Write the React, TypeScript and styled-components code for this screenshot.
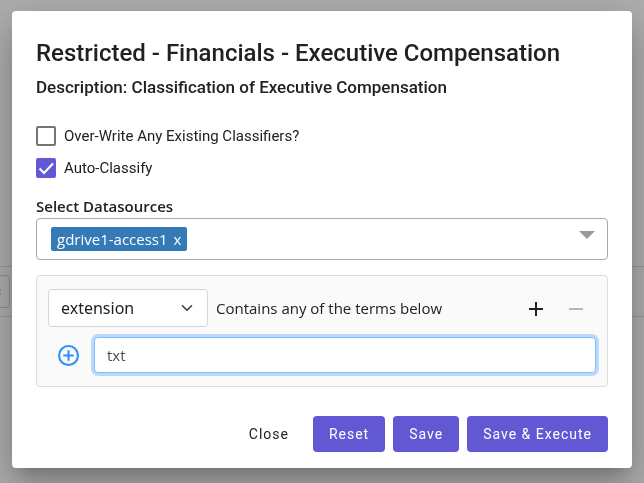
import React, { useState } from "react";
import styled, { createGlobalStyle } from "styled-components";

const GlobalStyle = createGlobalStyle`
  *, *::before, *::after { box-sizing: border-box; }
  body { margin: 0; background: #fff; color: #212121; font-family: Roboto, sans-serif; font-size: 15px; }
  button, input, select { font: inherit; color: inherit; margin: 0; }
`;

const Page = styled.div`
  min-height: 100vh;
  padding-top: 266px;
`;

const PageRow = styled.div`
  display: flex;
  align-items: center;
  height: 51px;
  border: solid #dee2e6;
  border-width: 1px 0;
`;

const PageTag = styled.span`
  width: 10px;
  height: 33px;
  border: 1px solid #ced4da;
  border-left: 0;
  border-radius: 0 4px 4px 0;
  color: #17a2b8;
  line-height: 31px;
  direction: rtl;
  padding-right: 8px;
`;

const Backdrop = styled.div`
  position: fixed;
  inset: 0;
  display: flex;
  align-items: flex-start;
  justify-content: center;
  padding: 11px 12px 15px;
  background: rgba(0, 0, 0, 0.32);
`;

const Dialog = styled.div`
  width: 100%;
  padding: 24px 24px 16px;
  border-radius: 4px;
  background: #fff;
  box-shadow: 0 11px 15px -7px rgba(0, 0, 0, 0.2), 0 24px 38px 3px rgba(0, 0, 0, 0.14),
    0 9px 46px 8px rgba(0, 0, 0, 0.12);
`;

const Title = styled.h1`
  margin: 0;
  font-size: 24px;
  font-weight: 500;
  line-height: 36px;
`;

const Subtitle = styled.h2`
  margin: 4px 0 0;
  font-size: 17px;
  font-weight: 500;
  line-height: 24px;
`;

const Options = styled.div`
  display: grid;
  gap: 12px;
  margin: 27px 0 16px;
`;

const Option = styled.label`
  display: flex;
  align-items: center;
  gap: 8px;
  line-height: 20px;
`;

const TickBox = styled.span`
  display: grid;
  width: 20px;
  height: 20px;
  & > * { grid-area: 1 / 1; }
  svg { pointer-events: none; }
`;

const Tick = styled.input`
  appearance: none;
  width: 20px;
  height: 20px;
  border: 2px solid #757575;
  border-radius: 2px;
  &:checked { background: #6258d3; border-color: #6258d3; }
`;

const FieldLabel = styled.div`
  font-family: "Open Sans", sans-serif;
  font-size: 15px;
  font-weight: 600;
  line-height: 24px;
`;

const SourceBox = styled.div`
  display: flex;
  align-items: center;
  justify-content: space-between;
  min-height: 42px;
  padding: 0 11px 0 14px;
  border: 1px solid #a8a8a8;
  border-radius: 4px;
`;

const Chip = styled.span`
  display: flex;
  align-items: center;
  gap: 6px;
  height: 24px;
  padding: 0 6px;
  border-radius: 2px;
  background: #337ab7;
  color: #fff;
  font-family: "Open Sans", sans-serif;
  font-size: 15px;
`;

const BareButton = styled.button`
  display: flex;
  padding: 0;
  border: 0;
  background: none;
`;

const OpenButton = styled(BareButton)`
  padding: 0 1px 8px;
`;

const Rule = styled.section`
  display: grid;
  gap: 10px;
  margin-top: 15px;
  padding: 13px 11px;
  border: 1px solid #dcdcdc;
  border-radius: 4px;
  background: #fafafa;
  font-family: "Open Sans", sans-serif;
`;

const RuleHead = styled.div`
  display: flex;
  align-items: center;
`;

const SelectWrap = styled.span`
  display: grid;
  align-items: center;
  width: 160px;
  margin-right: 8px;
  & > * { grid-area: 1 / 1; }
  svg { justify-self: end; margin-right: 15px; pointer-events: none; }
`;

const Select = styled.select`
  appearance: none;
  width: 100%;
  height: 38px;
  padding: 0 32px 0 12px;
  border: 1px solid #ced4da;
  border-radius: 4px;
  background: #fff;
  font-family: "Noto Sans", sans-serif;
  font-size: 16px;
`;

const RuleText = styled.span`
  flex: 1;
`;

const IconButton = styled(BareButton)`
  justify-content: center;
  align-items: center;
  width: 40px;
  height: 38px;
  &:disabled { color: #b8b8b8; }
`;

const TermRow = styled.div`
  display: flex;
  align-items: center;
`;

const AddTerm = styled(IconButton)`
  height: 36px;
  margin-right: 6px;
  color: #2e90fa;
`;

const TermInput = styled.input`
  flex: 1;
  min-width: 0;
  height: 36px;
  padding: 0 12px;
  border: 1px solid #80bdff;
  border-radius: 4px;
  outline: 0;
  background: #fff;
  box-shadow: 0 0 0 3px rgba(0, 123, 255, 0.25);
  color: #495057;
`;

const Actions = styled.footer`
  display: flex;
  justify-content: flex-end;
  gap: 8px;
  margin-top: 29px;
`;

const Action = styled.button<{ $filled?: boolean }>`
  height: 36px;
  padding: 0 16px;
  border: 0;
  border-radius: 4px;
  background: ${(p) => (p.$filled ? "#6258d3" : "transparent")};
  color: ${(p) => (p.$filled ? "#fff" : "#212121")};
  font-size: 14px;
  letter-spacing: 1px;
`;

export default function App() {
  const [overwrite, setOverwrite] = useState(false);
  const [auto, setAuto] = useState(true);
  const [term, setTerm] = useState("txt");

  return (
    <>
      <GlobalStyle />
      <Page>
        <PageRow>
          <PageTag>s</PageTag>
        </PageRow>
      </Page>
      <Backdrop>
        <Dialog role="dialog" aria-modal="true" aria-labelledby="dialog-title">
          <Title id="dialog-title">Restricted - Financials - Executive Compensation</Title>
          <Subtitle>Description: Classification of Executive Compensation</Subtitle>
          <Options>
            <Option>
              <TickBox>
                <Tick type="checkbox" checked={overwrite} onChange={(e) => setOverwrite(e.target.checked)} />
                {overwrite && <TickMark />}
              </TickBox>
              Over-Write Any Existing Classifiers?
            </Option>
            <Option>
              <TickBox>
                <Tick type="checkbox" checked={auto} onChange={(e) => setAuto(e.target.checked)} />
                {auto && <TickMark />}
              </TickBox>
              Auto-Classify
            </Option>
          </Options>
          <FieldLabel id="sources-label">Select Datasources</FieldLabel>
          <SourceBox role="group" aria-labelledby="sources-label">
            <Chip>
              gdrive1-access1
              <BareButton type="button" aria-label="Remove gdrive1-access1">x</BareButton>
            </Chip>
            <OpenButton type="button" aria-label="Open datasources">
              <svg width="16" height="8" viewBox="0 0 16 8" fill="#999"><path d="M0 0h16L8 8z" /></svg>
            </OpenButton>
          </SourceBox>
          <Rule>
            <RuleHead>
              <SelectWrap>
                <Select aria-label="Field" defaultValue="extension">
                  <option value="extension">extension</option>
                </Select>
                <svg width="12" height="12" viewBox="0 0 16 16" fill="none" stroke="#343a40" strokeWidth="2" strokeLinecap="round" strokeLinejoin="round">
                  <path d="m2 5 6 6 6-6" />
                </svg>
              </SelectWrap>
              <RuleText>Contains any of the terms below</RuleText>
              <IconButton type="button" aria-label="Add rule">
                <svg width="16" height="16" viewBox="0 0 16 16" stroke="currentColor" strokeWidth="2"><path d="M1 9h14M8 2v14" /></svg>
              </IconButton>
              <IconButton type="button" aria-label="Remove rule" disabled>
                <svg width="16" height="16" viewBox="0 0 16 16" stroke="currentColor" strokeWidth="2"><path d="M1 9h14" /></svg>
              </IconButton>
            </RuleHead>
            <TermRow>
              <AddTerm type="button" aria-label="Add term">
                <svg width="21" height="21" viewBox="0 0 20 20" fill="none" stroke="currentColor" strokeWidth="2">
                  <circle cx="10" cy="10" r="9" />
                  <path d="M5 10h10M10 5v10" />
                </svg>
              </AddTerm>
              <TermInput aria-label="Term" value={term} onChange={(e) => setTerm(e.target.value)} />
            </TermRow>
          </Rule>
          <Actions>
            <Action type="button">Close</Action>
            <Action type="button" $filled>Reset</Action>
            <Action type="button" $filled>Save</Action>
            <Action type="button" $filled>Save &amp; Execute</Action>
          </Actions>
        </Dialog>
      </Backdrop>
    </>
  );
}

function TickMark() {
  return (
    <svg width="20" height="20" viewBox="0 0 20 20" fill="none" stroke="#fff" strokeWidth="2">
      <path d="M3.500 10.500l4.500 4.500L17 5.500" />
    </svg>
  );
}
